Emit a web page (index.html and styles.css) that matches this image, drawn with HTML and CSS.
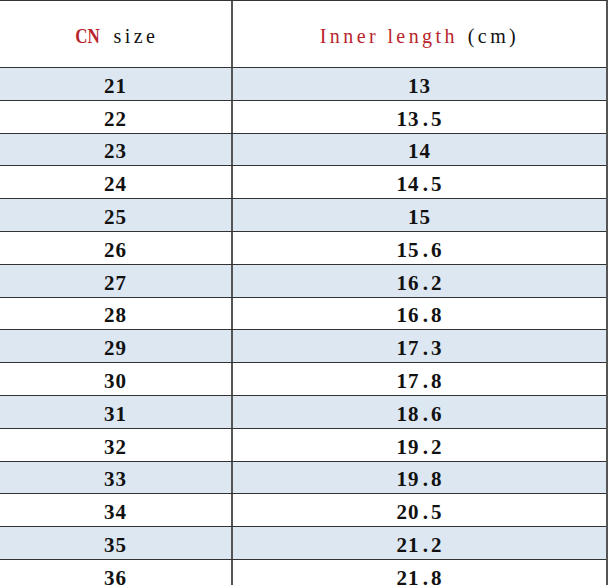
FILE: index.html
```html
<!DOCTYPE html>
<html>
<head>
<meta charset="utf-8">
<link rel="stylesheet" href="styles.css">
</head>
<body>
<div class="sheet">
  <div class="row head">
    <div class="cell c1"><span class="red cn">CN</span><span class="sp">size</span></div>
    <div class="cell c2"><span class="red wide">Inner length</span><span class="sp">(cm)</span></div>
  </div>
  <div class="row blue"><div class="cell c1">21</div><div class="cell c2">13</div></div>
  <div class="row"><div class="cell c1">22</div><div class="cell c2">13<span class="dot">.</span>5</div></div>
  <div class="row blue"><div class="cell c1">23</div><div class="cell c2">14</div></div>
  <div class="row"><div class="cell c1">24</div><div class="cell c2">14<span class="dot">.</span>5</div></div>
  <div class="row blue"><div class="cell c1">25</div><div class="cell c2">15</div></div>
  <div class="row"><div class="cell c1">26</div><div class="cell c2">15<span class="dot">.</span>6</div></div>
  <div class="row blue"><div class="cell c1">27</div><div class="cell c2">16<span class="dot">.</span>2</div></div>
  <div class="row"><div class="cell c1">28</div><div class="cell c2">16<span class="dot">.</span>8</div></div>
  <div class="row blue"><div class="cell c1">29</div><div class="cell c2">17<span class="dot">.</span>3</div></div>
  <div class="row"><div class="cell c1">30</div><div class="cell c2">17<span class="dot">.</span>8</div></div>
  <div class="row blue"><div class="cell c1">31</div><div class="cell c2">18<span class="dot">.</span>6</div></div>
  <div class="row"><div class="cell c1">32</div><div class="cell c2">19<span class="dot">.</span>2</div></div>
  <div class="row blue"><div class="cell c1">33</div><div class="cell c2">19<span class="dot">.</span>8</div></div>
  <div class="row"><div class="cell c1">34</div><div class="cell c2">20<span class="dot">.</span>5</div></div>
  <div class="row blue"><div class="cell c1">35</div><div class="cell c2">21<span class="dot">.</span>2</div></div>
  <div class="row"><div class="cell c1">36</div><div class="cell c2">21<span class="dot">.</span>8</div></div>
</div>
</body>
</html>
```
FILE: styles.css
```css
html, body {
  margin: 0;
  padding: 0;
  background: #ffffff;
  overflow: hidden;
}
.sheet {
  width: 608px;
  border-top: 1px solid #333;
  border-right: 2px solid #555;
  box-sizing: border-box;
  font-family: "Liberation Serif", "Noto Sans CJK SC", serif;
  color: #111;
}
.row {
  display: grid;
  grid-template-columns: 233px 1fr;
  height: 32.8px;
  box-sizing: border-box;
  border-bottom: 1px solid #333;
  background: #ffffff;
}
.row.blue {
  background: #dde7f2;
}
.row.head {
  height: 67px;
}
.cell {
  display: flex;
  align-items: center;
  justify-content: center;
  padding-top: 5px;
  box-sizing: border-box;
  font-size: 21px;
  font-weight: bold;
  letter-spacing: 1px;
  white-space: pre;
}
.dot {
  display: inline-block;
  width: 11.5px;
  text-align: center;
  letter-spacing: 0;
}
.head .cell {
  padding-top: 4px;
  font-size: 20px;
  font-weight: normal;
  letter-spacing: 3.4px;
  color: #111;
}
.head .cn {
  letter-spacing: 0;
  font-weight: bold;
  transform: scaleX(0.85);
  display: inline-block;
  margin-right: 12px;
}
.head .wide {
  margin-right: 10px;
}
.c1 {
  border-right: 2px solid #555;
}
.red {
  color: #b8252b;
}
```
